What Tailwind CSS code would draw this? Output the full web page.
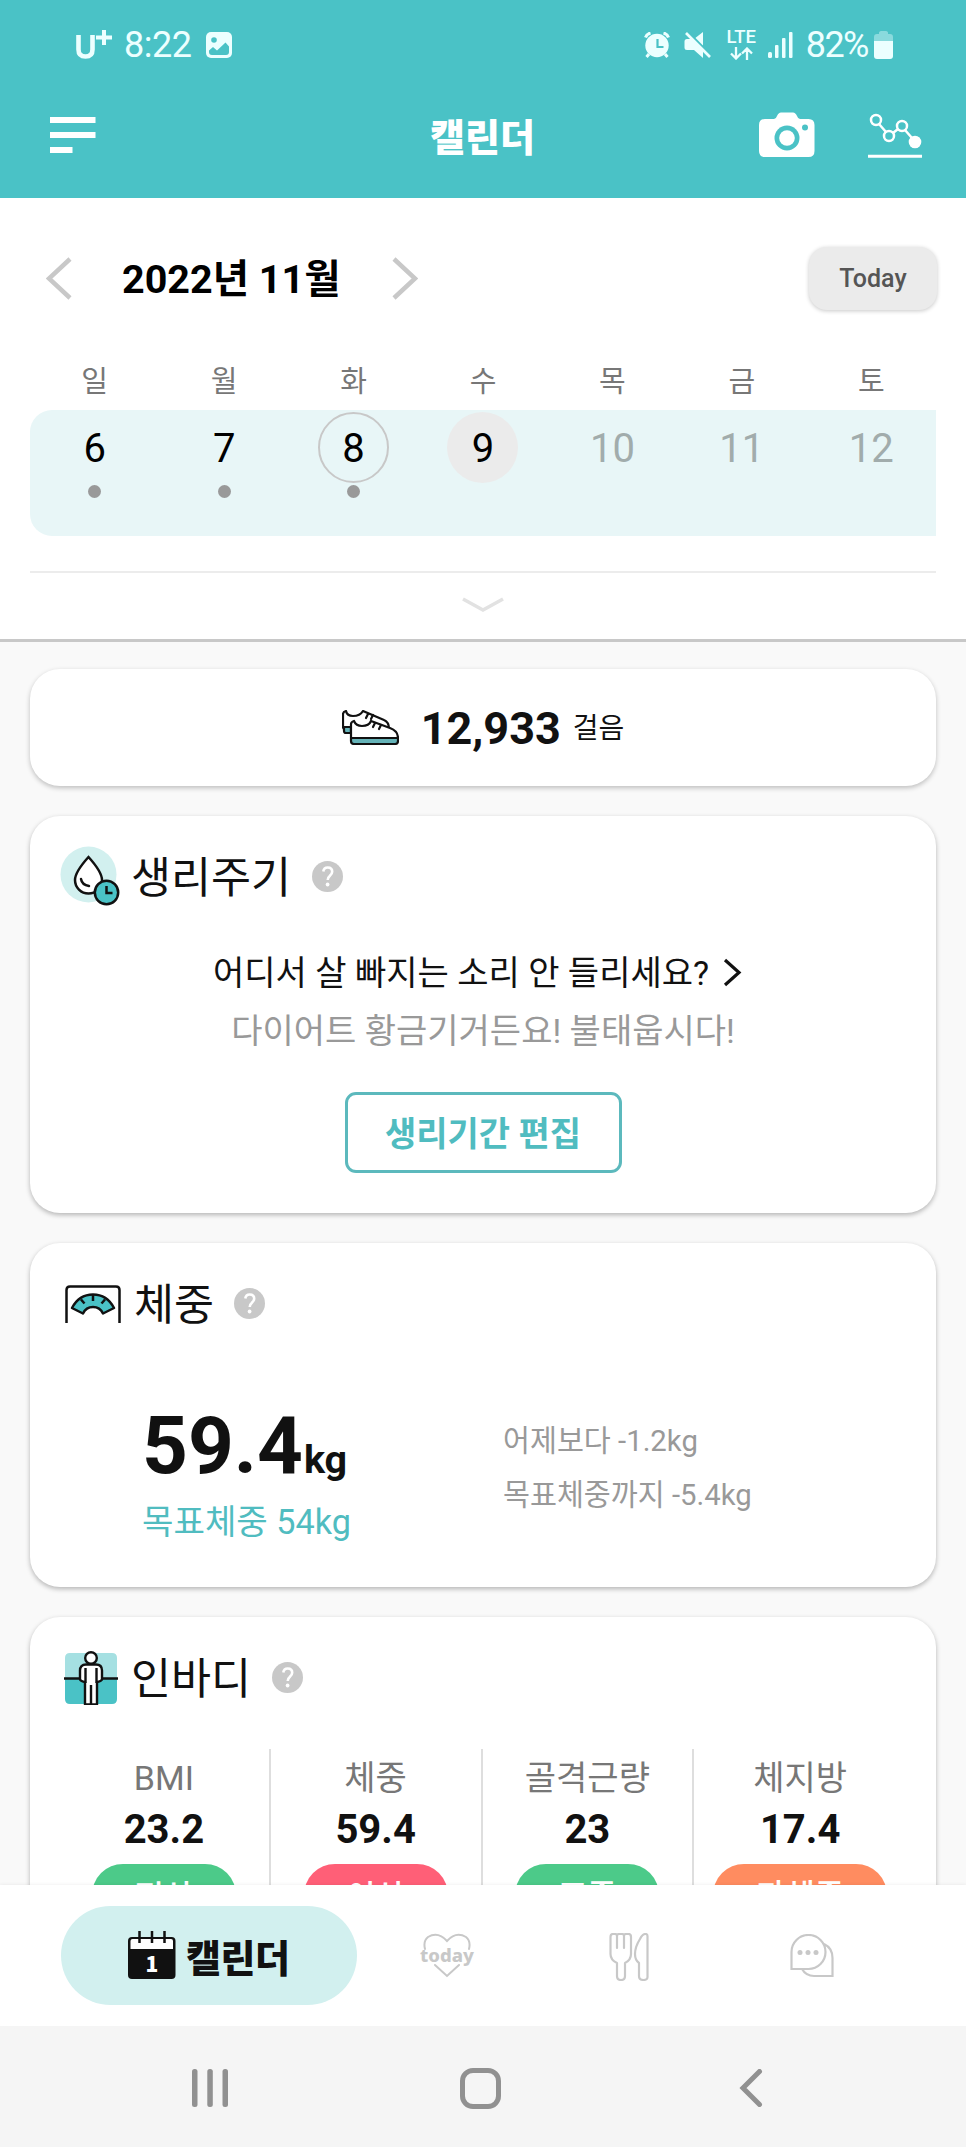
<!DOCTYPE html>
<html lang="ko">
<head>
<meta charset="utf-8">
<title>캘린더</title>
<script src="https://cdn.jsdelivr.net/npm/@tailwindcss/browser@4"></script>
</head>
<body class="bg-white font-['Roboto','Noto_Sans_CJK_KR',sans-serif] text-[#111]">
<div class="flex h-[2147px] w-[966px] flex-col overflow-hidden">

  <!-- Header -->
  <header class="h-[198px] shrink-0 bg-[#4ac2c6] text-white">
    <div class="flex h-[89px] items-center pl-[75px] pr-[73px] text-[#ecffff]">
      <svg class="h-[32px] w-[38px]" viewBox="0 0 38 32" fill="none" stroke="currentColor">
        <path d="M3.500 6v14.500q0 7 7 7t7-7V6" stroke-width="4.600"/><path d="M21 8.500h16M29 1v15" stroke-width="4"/>
      </svg>
      <span class="ml-[11px] text-[36px] leading-none tracking-[-0.5px]">8:22</span>
      <svg class="ml-[15px] mt-[1px] h-[26px] w-[26px]" viewBox="0 0 26 26">
        <rect width="26" height="26" rx="5" fill="currentColor"/><circle cx="8" cy="8" r="2.800" fill="#4ac2c6"/><path d="M3 18.500l4-3.500 4 3.500 8.500-8 3.500 4V20q0 3-3 3H6q-3 0-3-3z" fill="#4ac2c6"/>
      </svg>
      <div class="ml-auto flex items-center">
        <svg class="h-[26px] w-[26px]" viewBox="0 0 26 26" fill="none" stroke="currentColor">
          <circle cx="13" cy="13.500" r="11.700" fill="currentColor" stroke="none"/><path d="M1.500 5.500q1-3.500 5-4.500M24.500 5.500q-1-3.500-5-4.500M5 22l-2.500 3M21 22l2.500 3" stroke-width="3"/><path d="M13.500 7v8h6" stroke="#4ac2c6" stroke-width="2.200"/>
        </svg>
        <svg class="ml-[14px] h-[28px] w-[27px]" viewBox="0 0 27 28">
          <path d="M10 8l9-7v14z" fill="currentColor"/><path d="M4 1.500l23 23" stroke="#4ac2c6" stroke-width="3"/><path d="M2 2l24 24" stroke="currentColor" stroke-width="2.700"/><path d="M3 8h5l11 12v7l-9-8H3q-2.500 0-2.500-2.500v-6Q.5 8 3 8z" fill="currentColor"/>
        </svg>
        <div class="ml-[15px] flex w-[31px] flex-col items-center">
          <span class="text-[18.500px] font-medium leading-[15px]">LTE</span>
          <svg class="mt-[2px] h-[13px] w-[23px]" viewBox="0 0 23 13" fill="none" stroke="currentColor" stroke-width="2.300"><path d="M6 0v11M1 6.500l5 5 5-5M17 13V2M12 6.500l5-5 5 5"/></svg>
        </div>
        <svg class="ml-[11px] h-[27px] w-[25px]" viewBox="0 0 25 27" fill="currentColor"><rect y="21" width="4" height="6" rx="1.500"/><rect x="7" y="14" width="3.500" height="13" rx="1"/><rect x="14" y="7" width="3.500" height="20" rx="1"/><rect x="21" y="1" width="3.500" height="26" rx="1"/></svg>
        <span class="ml-[13px] text-[36px] leading-none tracking-[-1.5px]">82%</span>
        <svg class="ml-[6px] h-[28px] w-[19px]" viewBox="0 0 19 28" fill="currentColor"><path d="M0 10V6q0-3 3-3h2V1.500Q5.300 0 7 0h5q1.700 0 2 1.500V3h2q3 0 3 3v4z" opacity=".4"/><path d="M0 10h19v15q0 3-3 3H3q-3 0-3-3z"/></svg>
      </div>
    </div>
    <div class="grid h-[92px] grid-cols-[1fr_auto_1fr] items-center pl-[50px] pr-[43px]">
      <svg class="h-[36px] w-[46px]" viewBox="0 0 46 36" fill="currentColor"><path d="M0 0h45.500v6H0zM0 15h45.500v6H0zM0 30h22.500v6H0z"/></svg>
      <h1 class="mr-[8px] font-['Noto_Sans_CJK_KR',sans-serif] text-[38px] font-black leading-none">캘린더</h1>
      <div class="flex items-center justify-end gap-[52px]">
        <svg class="h-[46px] w-[56px]" viewBox="0 0 56 46"><path d="M6 7h9q2 0 3-3 1.500-3.500 4-3.500h12q2.500 0 4 3.500 1 3 3 3h8.500q6 0 6 6v26q0 6-6 6H6q-6 0-6-6V13q0-6 6-6z" fill="currentColor"/><circle cx="28" cy="26" r="12.500" fill="#4ac2c6"/><circle cx="28" cy="26" r="7.800" fill="currentColor"/><circle cx="46" cy="15.500" r="3" fill="#4ac2c6"/></svg>
        <svg class="h-[46px] w-[56px]" viewBox="0 0 56 46" fill="none" stroke="currentColor" stroke-width="2.500"><circle cx="9" cy="8" r="5"/><circle cx="22" cy="24" r="5"/><circle cx="35" cy="14" r="5"/><circle cx="48" cy="30" r="6.300" fill="currentColor" stroke="none"/><path d="M12 12l7 8M26 21l5-4M38 18l7 8"/><path d="M1 44.300h54" stroke-width="3"/></svg>
      </div>
    </div>
  </header>

  <!-- Week calendar -->
  <section class="flex h-[444px] shrink-0 flex-col border-b-[3px] border-[#c8c8c8] bg-white">
    <div class="mt-[48px] flex h-[64px] items-center pl-[46px] pr-[29px]">
      <svg class="h-[43px] w-[26px]" viewBox="0 0 26 43" fill="none" stroke="#c8c8c8" stroke-width="4.500"><path d="M24 2L3 21.500 24 41"/></svg>
      <h2 class="ml-[50px] w-[221px] whitespace-nowrap pt-[3px] text-[39.500px] font-bold leading-none text-black">2022년 11월</h2>
      <svg class="ml-[49px] h-[43px] w-[26px]" viewBox="0 0 26 43" fill="none" stroke="#c8c8c8" stroke-width="4.500"><path d="M2 2l21 19.500L2 41"/></svg>
      <button class="ml-auto h-[63px] w-[128px] rounded-[18px] bg-[#ebebeb] pt-[2px] text-[25px] font-medium text-[#555] shadow-[0_1px_4px_rgba(0,0,0,0.22)]">Today</button>
    </div>
    <div class="mx-[30px] mt-[51px] grid h-[49px] grid-cols-7 pt-[6px] text-center text-[29px] leading-[30px] text-[#777]">
      <span>일</span><span>월</span><span>화</span><span>수</span><span>목</span><span>금</span><span>토</span>
    </div>
    <div class="mx-[30px] grid h-[126px] grid-cols-7 justify-items-center rounded-l-[22px] bg-[#e8f6f7] pt-[2px] text-[40px] leading-none text-black">
      <div class="flex flex-col items-center"><span class="flex size-[71px] items-center justify-center pt-[2px]">6</span><i class="mt-[2px] size-[13px] rounded-full bg-[#999]"></i></div>
      <div class="flex flex-col items-center"><span class="flex size-[71px] items-center justify-center pt-[2px]">7</span><i class="mt-[2px] size-[13px] rounded-full bg-[#999]"></i></div>
      <div class="flex flex-col items-center"><span class="flex size-[71px] items-center justify-center rounded-full border-2 border-[#c8c8c8] pt-[2px]">8</span><i class="mt-[2px] size-[13px] rounded-full bg-[#999]"></i></div>
      <div><span class="flex size-[71px] items-center justify-center rounded-full bg-[#ebebeb] pt-[2px]">9</span></div>
      <div class="text-[#a1acac]"><span class="flex size-[71px] items-center justify-center pt-[2px]">10</span></div>
      <div class="text-[#a1acac]"><span class="flex size-[71px] items-center justify-center pt-[2px]">11</span></div>
      <div class="text-[#a1acac]"><span class="flex size-[71px] items-center justify-center pt-[2px]">12</span></div>
    </div>
    <div class="mx-[30px] mt-[35px] h-[2px] bg-[#ececec]"></div>
    <svg class="mx-auto mt-[24px] h-[16px] w-[44px]" viewBox="0 0 44 16" fill="none" stroke="#e2e2e2" stroke-width="3.500"><path d="M2 2l20 11L42 2"/></svg>
  </section>

  <!-- Cards -->
  <main class="h-[1243px] shrink-0 overflow-hidden bg-[#f9f9f9] px-[30px] pt-[27px]">
    <section class="flex h-[117px] items-center justify-center rounded-[30px] bg-white pt-[2px] shadow-[0_2px_5px_rgba(0,0,0,0.24)]">
      <svg class="mb-[2px] h-[35px] w-[57px]" viewBox="0 0 57 35" fill="none" stroke="#111" stroke-width="2.200" stroke-linejoin="round" stroke-linecap="round">
        <path d="M9 19H3q-2 0-2-2V4q0-2 3-3 1 5 7 5 7 0 10-5l21 9q5 2 5 9v3" fill="#fff"/>
        <path d="M2 17h7v6H4q-2 0-2-2z" fill="#65b3b8"/>
        <path d="M9 28V14q0-2 3-3 2 5 8 5 7 0 9-5l19 7q8 3 8 10z" fill="#fff"/>
        <path d="M9 28h47v3q0 3-3 3H12q-3 0-3-3z" fill="#65b3b8"/>
        <path d="M24 8l2-4M29 9l2-4M31 17l2-4M37 19l2-4"/>
      </svg>
      <span class="ml-[22px] text-[45px] font-bold leading-none">12,933</span>
      <span class="ml-[12px] text-[28px] leading-none">걸음</span>
    </section>

    <section class="mt-[30px] h-[397px] rounded-[30px] bg-white pt-[27px] shadow-[0_2px_5px_rgba(0,0,0,0.28)]">
      <div class="flex h-[66px] items-center pl-[30px]">
        <svg class="h-[60px] w-[60px]" viewBox="0 0 60 60" fill="none" stroke="#111" stroke-width="2.500">
          <circle cx="28.500" cy="28.500" r="28" fill="#d2f0ef" stroke="none"/>
          <path d="M28.500 11Q15 26 15 34a13.500 13.500 0 0 0 27 0Q42 26 28.500 11z" fill="#fff"/><path d="M21 33q1 6 8 7" stroke-linecap="round"/>
          <circle cx="46.500" cy="46.500" r="11.700" fill="#4ac2c6"/><path d="M46.500 40v7h6"/>
        </svg>
        <h3 class="ml-[11px] pt-[5px] text-[43.500px] leading-none">생리주기</h3>
        <svg class="ml-[21px] h-[31px] w-[31px]" viewBox="0 0 31 31"><circle cx="15.500" cy="15.500" r="15.500" fill="#c8c8c8"/><path d="M11.300 10.500q.5-4 4.400-4 4.500 0 4.500 4.200 0 2-2.500 4.300-2 1.700-2 4" fill="none" stroke="#fff" stroke-width="2.600"/><circle cx="15.600" cy="23.500" r="1.900" fill="#fff"/></svg>
      </div>
      <div class="mt-[47px] flex h-[34px] items-center justify-center pr-[11px] text-[34px] leading-none">
        <span class="whitespace-nowrap">어디서 살 빠지는 소리 안 들리세요?</span>
        <svg class="mb-[2px] ml-[14px] h-[29px] w-[19px]" viewBox="0 0 19 29" fill="none" stroke="#111" stroke-width="3.200"><path d="M2 2l14 12.500L2 27"/></svg>
      </div>
      <p class="mt-[24px] text-center text-[34px] leading-[34px] text-[#999]">다이어트 황금기거든요! 불태웁시다!</p>
      <button class="mx-auto mt-[44px] block h-[81px] w-[277px] rounded-[11px] border-[3px] border-[#5cb9bd] pt-[2px] text-[34px] font-bold leading-none text-[#50bcc0]">생리기간 편집</button>
    </section>

    <section class="mt-[30px] h-[344px] rounded-[30px] bg-white pt-[27px] shadow-[0_2px_5px_rgba(0,0,0,0.28)]">
      <div class="flex h-[67px] items-center pl-[35px]">
        <svg class="h-[38px] w-[56px]" viewBox="0 0 56 38" fill="none" stroke="#111" stroke-width="2.500">
          <path d="M1.500 38V5q0-3.500 3.500-3.500h46q3.500 0 3.500 3.500v33"/>
          <path d="M7 23Q14 9.500 28 9.500T49 23l-11 5.500Q35 22 28 22t-10 6.500z" fill="#4ac2c6" stroke-linejoin="round"/><path d="M28 10v6M16 14.500l3.500 4M40 14.500l-3.500 4"/>
        </svg>
        <h3 class="ml-[13px] pt-[5px] text-[43.500px] leading-none">체중</h3>
        <svg class="ml-[20px] h-[31px] w-[31px]" viewBox="0 0 31 31"><circle cx="15.500" cy="15.500" r="15.500" fill="#c8c8c8"/><path d="M11.300 10.500q.5-4 4.400-4 4.500 0 4.500 4.200 0 2-2.500 4.300-2 1.700-2 4" fill="none" stroke="#fff" stroke-width="2.600"/><circle cx="15.600" cy="23.500" r="1.900" fill="#fff"/></svg>
      </div>
      <div class="mt-[69px] flex pl-[112px]">
        <div class="w-[361px]">
          <p class="flex items-baseline text-[80px] font-bold leading-[80px]"><span>59.4</span><span class="ml-[1px] text-[39.500px] leading-none">kg</span></p>
          <p class="mt-[16px] text-[34.200px] leading-[40px] text-[#50bcc0]">목표체중 54kg</p>
        </div>
        <div class="pt-[8px] text-[29.300px] leading-[54px] text-[#999]">
          <p>어제보다 -1.2kg</p>
          <p>목표체중까지 -5.4kg</p>
        </div>
      </div>
    </section>

    <section class="mt-[30px] h-[440px] rounded-[30px] bg-white pt-[27px] shadow-[0_2px_5px_rgba(0,0,0,0.28)]">
      <div class="flex h-[67px] items-center pl-[34px]">
        <svg class="h-[54px] w-[54px]" viewBox="0 0 54 54" fill="none" stroke="#111" stroke-width="2.400" stroke-linejoin="round">
          <path d="M6 2h42q5 0 5 5v20H1V7q0-5 5-5z" fill="#a5e0e2" stroke="none"/><path d="M1 27h52v21q0 5-5 5H6q-5 0-5-5z" fill="#4ac2c6" stroke="none"/>
          <path d="M0 27.500h54"/>
          <path d="M22 13.500h10q6 0 6 6V28q0 2-5 3v22.500H21V31q-5-1-5-3v-8.500q0-6 6-6z" fill="#fff"/>
          <path d="M21.500 17v15M32.500 17v15M27 34v19"/><circle cx="27" cy="7" r="5.800" fill="#fff"/>
        </svg>
        <h3 class="ml-[13px] pt-[5px] text-[43.500px] leading-none">인바디</h3>
        <svg class="ml-[21px] h-[31px] w-[31px]" viewBox="0 0 31 31"><circle cx="15.500" cy="15.500" r="15.500" fill="#c8c8c8"/><path d="M11.300 10.500q.5-4 4.400-4 4.500 0 4.500 4.200 0 2-2.500 4.300-2 1.700-2 4" fill="none" stroke="#fff" stroke-width="2.600"/><circle cx="15.600" cy="23.500" r="1.900" fill="#fff"/></svg>
      </div>
      <div class="ml-[29px] mr-[30px] mt-[38px] grid h-[200px] grid-cols-4 divide-x-[2px] divide-[#dedede] text-center">
        <div class="pt-[9px]"><p class="text-[34px] leading-[40px] text-[#777]">BMI</p><p class="mt-[12px] text-[40px] font-bold leading-[40px]">23.2</p><p class="mx-auto mt-[14px] h-[64px] w-[144px] rounded-[31px] bg-[#4cca89] text-[32px] font-medium leading-[66px] text-white">정상</p></div>
        <div class="pt-[9px]"><p class="text-[34px] leading-[40px] text-[#777]">체중</p><p class="mt-[12px] text-[40px] font-bold leading-[40px]">59.4</p><p class="mx-auto mt-[14px] h-[64px] w-[144px] rounded-[31px] bg-[#ff5f77] text-[32px] font-medium leading-[66px] text-white">이상</p></div>
        <div class="pt-[9px]"><p class="text-[34px] leading-[40px] text-[#777]">골격근량</p><p class="mt-[12px] text-[40px] font-bold leading-[40px]">23</p><p class="mx-auto mt-[14px] h-[64px] w-[144px] rounded-[31px] bg-[#4cca89] text-[32px] font-medium leading-[64px] text-white">표준</p></div>
        <div class="pt-[9px]"><p class="text-[34px] leading-[40px] text-[#777]">체지방</p><p class="mt-[12px] text-[40px] font-bold leading-[40px]">17.4</p><p class="mx-auto mt-[14px] h-[64px] w-[174px] rounded-[31px] bg-[#ff8c60] text-[32px] font-medium leading-[65px] text-white">과체중</p></div>
      </div>
    </section>
  </main>

  <!-- App tab bar -->
  <nav class="flex h-[141px] shrink-0 items-center bg-white pl-[61px] shadow-[0_-1px_3px_rgba(0,0,0,0.05)]">
    <div class="flex h-[99px] w-[296px] items-center rounded-full bg-[#d2f0ef] pl-[67px]">
      <svg class="mb-[2px] h-[48px] w-[48px]" viewBox="0 0 48 48">
        <rect x="0" y="6" width="47.500" height="42" rx="4" fill="#111"/><path d="M2.500 18V10q0-2 2-2h38.500q2 0 2 2v8z" fill="#fff"/>
        <path d="M11.500 0v12M24 0v12M36.500 0v12" stroke="#111" stroke-width="2.500"/>
        <text x="24" y="40.500" fill="#fff" text-anchor="middle" font-family="Noto Sans CJK KR, sans-serif" font-weight="900" font-size="21">1</text>
      </svg>
      <span class="ml-[10px] font-['Noto_Sans_CJK_KR',sans-serif] text-[38px] font-black leading-none tracking-[-0.500px]">캘린더</span>
    </div>
    <svg class="ml-[62px] h-[48px] w-[56px]" viewBox="0 0 56 48" fill="none" stroke="#c8c8c8" stroke-width="2">
      <path d="M6 17Q4 9 9 5q10-6 19 4 9-10 19-4 5 4 3 12M16 33l12 11 12-11" stroke-linecap="round"/>
      <text x="28" y="29.500" fill="#c8c8c8" stroke="none" text-anchor="middle" font-family="Noto Sans, sans-serif" font-weight="800" font-size="18.500">today</text>
    </svg>
    <svg class="ml-[134px] mt-[3px] h-[48px] w-[40px]" viewBox="0 0 40 48" fill="none" stroke="#c8c8c8" stroke-width="2.200" stroke-linejoin="round" stroke-linecap="round">
      <path d="M1.500 4q0-3 2.500-3H6q2 0 2 2 0-2 2-2h3q2 0 2 2 0-2 2-2h2.500Q22 1 22 4v17q0 6-6 9v13q0 4-4 4t-4-4V30q-6.500-3-6.500-9zM8 3v12M15 3v12"/>
      <path d="M38.500 3q0-2-2-2-3 0-5.500 5-5 8-5 15 0 6 4 9v13q0 4 4.500 4t4-4z"/>
    </svg>
    <svg class="ml-[141px] h-[44px] w-[44px]" viewBox="0 0 44 44" fill="none" stroke="#c8c8c8" stroke-width="2.200">
      <path d="M1.500 35V18a17 17 0 1 1 17 17zM34 10q8.500 4 8.500 14v18H24q-8 0-12-7"/><g fill="#c8c8c8" stroke="none"><circle cx="10" cy="18.500" r="2.500"/><circle cx="18" cy="18.500" r="2.500"/><circle cx="26" cy="18.500" r="2.500"/></g>
    </svg>
  </nav>

  <!-- System navigation -->
  <footer class="flex h-[121px] shrink-0 items-center bg-[#f5f5f5] pl-[192px] pt-[3px]">
    <svg class="h-[38px] w-[37px]" viewBox="0 0 37 38" fill="#919191"><rect width="5.500" height="38" rx="2.500"/><rect x="15.300" width="5.500" height="38" rx="2.500"/><rect x="30.500" width="5.500" height="38" rx="2.500"/></svg>
    <div class="ml-[231px] size-[41px] rounded-[13px] border-[5px] border-[#919191]"></div>
    <svg class="ml-[238px] h-[38px] w-[24px]" viewBox="0 0 24 38" fill="none" stroke="#919191" stroke-width="5" stroke-linecap="round"><path d="M20.500 2.500L4 19l16.500 16.500"/></svg>
  </footer>
</div>
</body>
</html>
